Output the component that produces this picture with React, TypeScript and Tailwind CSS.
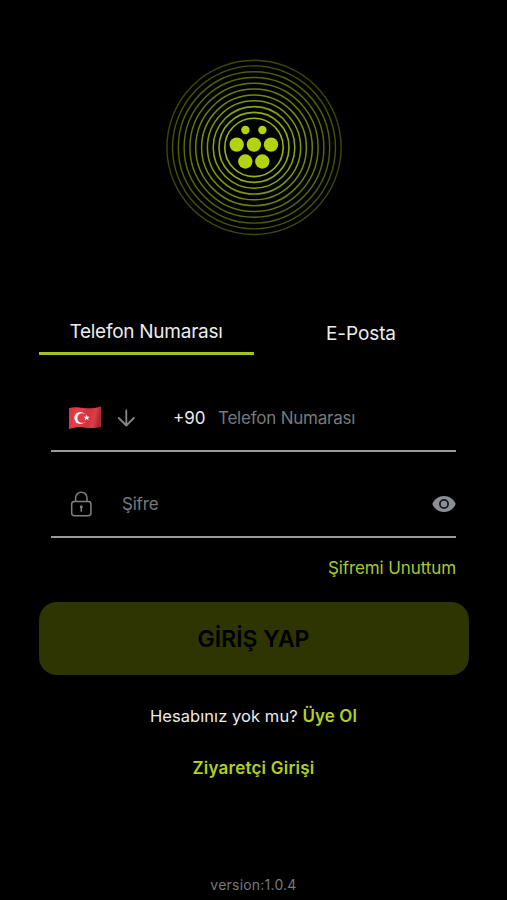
import React, { useState } from 'react'

const rings = [29.2, 35, 40.8, 46.6, 52.4, 58.3, 64.1, 69.9, 75.7, 81.5, 87.1]

const dots = [
  { x: 79.4, y: 71, r: 4.2 },
  { x: 96.4, y: 71, r: 4.2 },
  { x: 70.7, y: 85.6, r: 7.2 },
  { x: 87.9, y: 85.6, r: 7.2 },
  { x: 105, y: 85.6, r: 7.2 },
  { x: 79.3, y: 102.5, r: 7.2 },
  { x: 96.3, y: 102.5, r: 7.2 },
]

function Logo() {
  return (
    <svg width="176" height="177" viewBox="0 0 176 177" fill="none">
      {rings.map((r, i) => (
        <circle key={r} cx="88" cy="88.400" r={r} stroke="#b2d30d" strokeWidth={1.6 - i * 0.02} opacity={0.86 - i * 0.052} />
      ))}
      {dots.map((dot) => (
        <circle key={`${dot.x}-${dot.y}`} cx={dot.x} cy={dot.y} r={dot.r} fill="#b2d30d" />
      ))}
    </svg>
  )
}

function TurkishFlag() {
  return (
    <svg width="34" height="26" viewBox="0 0 34 26">
      <defs>
        <linearGradient id="flag" x1="0" x2="1" y1="0" y2="0.15">
          <stop offset="0" stopColor="#d92f3b" />
          <stop offset="0.3" stopColor="#e83f49" />
          <stop offset="0.65" stopColor="#d2323e" />
          <stop offset="0.85" stopColor="#de3c46" />
          <stop offset="1" stopColor="#b02733" />
        </linearGradient>
      </defs>
      <path d="M1 3.200C6 1.500 10.500 2.600 16 3.100S27 3.400 33 1.200V21.700C28 23.600 22 23.200 17 22.700S6.500 22 1 24.200Z" fill="url(#flag)" />
      <circle cx="12.300" cy="13.100" r="6" fill="#fff" />
      <circle cx="14.200" cy="13.100" r="4.900" fill="#e33843" />
      <path d="M18.700 9.700l.8 2 2.200.1-1.700 1.400.6 2.100-1.900-1.200-1.800 1.300.5-2.200-1.700-1.400 2.200-.1z" fill="#fff" />
    </svg>
  )
}

function LockIcon() {
  return (
    <svg width="22" height="26" viewBox="0 0 22 26" fill="none" stroke="#7f8184" strokeWidth="1.500">
      <rect x="1.700" y="10.500" width="19.200" height="14.200" rx="2.600" />
      <path d="M5.600 10.500V6.900a5.700 5.700 0 0 1 11.400 0v3.600" />
      <path d="M11.300 16v4.700" strokeWidth="1.600" />
      <circle cx="11.300" cy="15.800" r="1.500" fill="#7f8184" stroke="none" />
    </svg>
  )
}

function EyeIcon() {
  return (
    <svg width="24" height="16" viewBox="0 0 24 16">
      <path d="M12 0C6.700 0 2.300 3.200.3 8c2 4.800 6.400 8 11.700 8s9.700-3.200 11.700-8C21.700 3.200 17.300 0 12 0z" fill="#8b8f94" />
      <circle cx="12" cy="8" r="4.100" fill="#8b8f94" stroke="#14181c" strokeWidth="1.800" />
    </svg>
  )
}

export default function App() {
  const [phone, setPhone] = useState('')
  const [password, setPassword] = useState('')
  const [showPassword, setShowPassword] = useState(false)

  return (
    <div className="flex h-[900px] w-[507px] flex-col items-center overflow-hidden bg-black font-['Inter',sans-serif] text-[#ececec]">
      {/* Logo */}
      <div className="mt-[59px] h-[177px]">
        <Logo />
      </div>

      {/* Tabs */}
      <div className="mt-[74px] grid h-[45px] w-[430px] grid-cols-2">
        <button className="flex items-center justify-center border-b-[3px] border-[#a3c02b] pt-[3px] text-[19px] tracking-[-0.26px] whitespace-nowrap">
          Telefon Numarası
        </button>
        <button className="flex items-center justify-center pt-1 text-[19px] tracking-[-0.1px] whitespace-nowrap">
          E-Posta
        </button>
      </div>

      {/* Phone */}
      <div className="mt-[31px] flex h-[66px] w-[405px] items-center border-b-2 border-[#9a9a9a] pl-[17px]">
        <TurkishFlag />
        <svg className="ml-[15px]" width="18" height="18" viewBox="0 0 18 18" fill="none" stroke="#85878a" strokeWidth="1.800" strokeLinecap="round" strokeLinejoin="round">
          <path d="M9.300 1.500v15M1.800 9l7.500 7.500L16.800 9" />
        </svg>
        <span className="ml-[38px] w-[45px] shrink-0 pt-0.5 text-[17px]">+90</span>
        <input
          value={phone}
          onChange={(e) => setPhone(e.target.value)}
          placeholder="Telefon Numarası"
          className="min-w-0 flex-1 bg-transparent pt-0.5 text-[17px] tracking-[-0.22px] outline-none placeholder:text-[#77797c]"
        />
      </div>

      {/* Password */}
      <div className="mt-5 flex h-[66px] w-[405px] items-center border-b-2 border-[#9a9a9a] pl-[19px]">
        <LockIcon />
        <input
          type={showPassword ? 'text' : 'password'}
          value={password}
          onChange={(e) => setPassword(e.target.value)}
          placeholder="Şifre"
          className="ml-[30px] min-w-0 flex-1 bg-transparent pt-0.5 text-[17px] tracking-[-0.2px] outline-none placeholder:text-[#77797c]"
        />
        <button onClick={() => setShowPassword(!showPassword)}>
          <EyeIcon />
        </button>
      </div>

      <div className="mt-[18px] flex w-[405px] justify-end">
        <button className="text-[17px] leading-6 tracking-[-0.1px] text-[#a9c72a]">Şifremi Unuttum</button>
      </div>

      <button className="mt-[22px] h-[73px] w-[430px] shrink-0 rounded-[18px] bg-[#2e3502] pt-px text-[23px] font-semibold text-black">
        GİRİŞ YAP
      </button>

      {/* Footer links */}
      <p className="mt-[29px] text-[16.500px] leading-6 tracking-[0.07px] whitespace-nowrap">
        Hesabınız yok mu? <button className="text-[17px] font-semibold tracking-[0.1px] text-[#b0cf20]">Üye Ol</button>
      </p>
      <button className="mt-7 text-[17px] leading-6 font-semibold tracking-[0.23px] text-[#b0cf20]">Ziyaretçi Girişi</button>

      <span className="mt-auto pb-[5px] text-[14px] leading-5 tracking-[0.22px] text-[#77797c]">version:1.0.4</span>
    </div>
  )
}
